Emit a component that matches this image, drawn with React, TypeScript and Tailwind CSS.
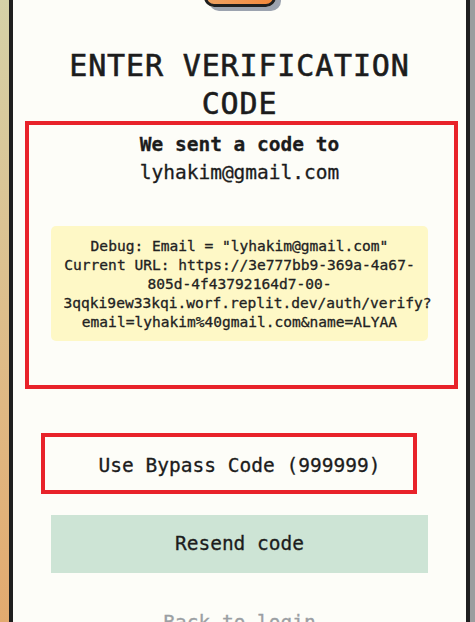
import React from "react";

const mono = { fontFamily: '"DejaVu Sans Mono", "Liberation Mono", monospace' };

export default function App() {
  return (
    <div
      className="w-[475px] h-[622px] overflow-hidden flex pl-[9px] bg-gradient-to-b from-[#d5d1a7] to-[#e3aa6f]"
      style={mono}
    >
      <div className="w-[461px] h-[700px] shrink-0 border-x-4 border-[#1f1f1f] bg-[#fdfdf8] shadow-[5px_0_0_#9b9d9f] flex flex-col items-center px-[38px] text-[#1c1c1c] [-webkit-text-stroke:0.3px]">
        {/* logo */}
        <div className="w-[72px] h-[64px] -mt-[57px] rounded-[10px] border-[3px] border-[#1f1f1f] bg-gradient-to-r from-[#eea262] to-[#f3883a] shadow-[5px_4px_0_#9ca3af]" />

        <h1 className="mt-[40px] text-center text-[30px] leading-[38px] tracking-[0.85px] font-normal [-webkit-text-stroke:0.6px]">
          ENTER VERIFICATION
          <br />
          CODE
        </h1>

        <div className="self-stretch -mt-[2px] ml-[-26px] mr-[-30px] border-4 border-[#e8232a] pt-[6px] pb-[44px] pl-[22px] pr-[26px] flex flex-col items-center">
          <p className="text-center text-[19.5px] leading-[28px]">
            <span className="font-bold">We sent a code to</span>
            <br />
            <span>lyhakim@gmail.com</span>
          </p>
          <div className="mt-[39px] self-stretch h-[115px] rounded-[5px] bg-[#fef8c6] py-[10px] text-[14.55px] leading-[19px] text-center text-[#222]">
            <div className="whitespace-nowrap">Debug: Email = "lyhakim@gmail.com"</div>
            <div className="whitespace-nowrap">Current URL: https://3e777bb9-369a-4a67-</div>
            <div className="whitespace-nowrap">805d-4f43792164d7-00-</div>
            <div className="whitespace-nowrap pl-[10px] -mr-[6px]">3qqki9ew33kqi.worf.replit.dev/auth/verify?</div>
            <div className="whitespace-nowrap">email=lyhakim%40gmail.com&amp;name=ALYAA</div>
          </div>
        </div>

        <div className="relative self-stretch mt-[48px]">
          <button className="w-full h-[58px] flex items-center justify-center text-[19.5px] leading-[28px] text-[#1c1c1c]">
            Use Bypass Code (999999)
          </button>
          <div className="absolute left-[-10px] right-[11px] top-[-4px] bottom-[1px] border-4 border-[#e8232a] pointer-events-none" />
        </div>

        <button className="self-stretch mt-[20px] h-[58px] bg-[#cde4d5] flex items-center justify-center text-[19.5px] leading-[28px] text-[#1c1c1c]">
          Resend code
        </button>

        <div className="mt-[36px] text-[19.5px] leading-[28px] text-[#9b9fa3]">Back to login</div>
      </div>
    </div>
  );
}
